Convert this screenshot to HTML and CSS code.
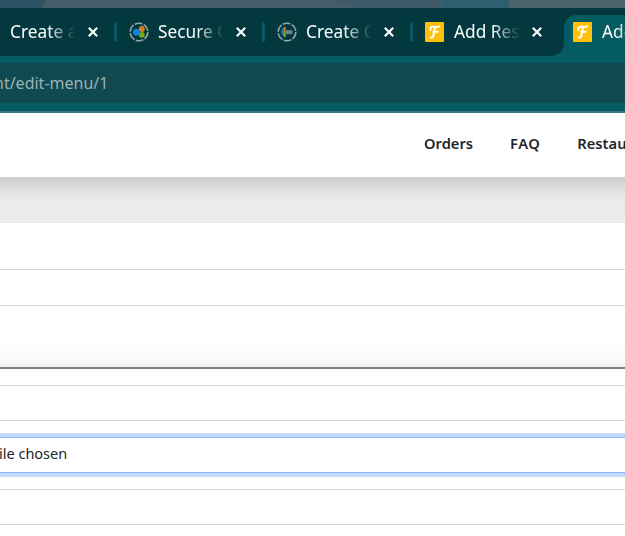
FILE: index.html
```html
<!DOCTYPE html>
<html lang="en">
<head>
<meta charset="utf-8">
<title>Edit menu</title>
<link rel="stylesheet" href="styles.css">
</head>
<body>
<svg class="wallpaper" viewBox="0 0 625 8" preserveAspectRatio="none">
  <path fill="#465c69" d="M0 0h625v8H0z"/>
  <path fill="#2c5263" d="M0 0h46l-5 8H0z"/>
  <path fill="#3f5a69" d="M335 0h105v8h-85z"/>
  <path fill="#2e5f70" d="M439 0h69l2 8h-67z"/>
  <path fill="#4c626d" d="M508 0h117v8H510z"/>
</svg>
<div class="tabs">
  <div class="tab first">
    <span class="title">Create a</span>
    <svg class="close" viewBox="0 0 10 10"><path d="M.8.8l8.4 8.4M9.2.8L.8 9.2"/></svg>
    <i class="sep"></i>
  </div>
  <div class="tab">
    <svg class="icon" viewBox="0 0 20 20">
      <circle class="ring" cx="10" cy="10" r="8.8"/>
      <circle cx="12.8" cy="7.1" r="3" fill="#d7811c"/><circle cx="12.8" cy="12.8" r="2.9" fill="#72ad16"/><circle cx="7.4" cy="10.2" r="3.4" fill="#0b86df"/>
    </svg>
    <span class="title">Secure C</span>
    <svg class="close" viewBox="0 0 10 10"><path d="M.8.8l8.4 8.4M9.2.8L.8 9.2"/></svg>
    <i class="sep"></i>
  </div>
  <div class="tab">
    <svg class="icon" viewBox="0 0 20 20">
      <circle class="ring" cx="10" cy="10" r="8.8"/>
      <path fill="#1681bd" d="M6.7 5.500v9C3.400 12 3.400 8 6.700 5.500z"/><path fill="#cf8427" d="M6.700 5h2v5h-2z"/><path fill="#81ad28" d="M6.700 10h2v5h-2z"/>
      <path fill="#65767b" d="M8.800 8.200h6.600v4H8.800z"/><path stroke="#929ea1" stroke-width=".6" d="M10.500 8.400v3.400m2-3.400v3.400m2-3.400v3.400"/>
    </svg>
    <span class="title">Create C</span>
    <svg class="close" viewBox="0 0 10 10"><path d="M.8.8l8.4 8.4M9.2.8L.8 9.2"/></svg>
    <i class="sep"></i>
  </div>
  <div class="tab">
    <svg class="icon brand" viewBox="0 0 19 20">
      <rect width="19" height="20" rx="1" fill="#ffc107"/>
      <path class="mark" d="M5.600 8C4.500 5.300 6.600 4.500 9 4.800c2 .2 3.600.2 5.200-.5M10 5.200L8.400 13.500c-.4 2-1.500 2.700-2.600 1.700M8.400 9.800h4.400"/>
    </svg>
    <span class="title">Add Rest</span>
    <svg class="close" viewBox="0 0 10 10"><path d="M.8.8l8.4 8.4M9.2.8L.8 9.2"/></svg>
  </div>
  <div class="tab active">
    <svg class="curve" viewBox="0 0 14 14"><path d="M14 0v14H0C9 14 14 9 14 0z"/></svg>
    <svg class="icon brand" viewBox="0 0 19 20">
      <rect width="19" height="20" rx="1" fill="#ffc107"/>
      <path class="mark" d="M5.600 8C4.500 5.300 6.600 4.500 9 4.800c2 .2 3.600.2 5.200-.5M10 5.200L8.400 13.500c-.4 2-1.500 2.700-2.600 1.700M8.400 9.800h4.400"/>
    </svg>
    <span class="title">Add</span>
  </div>
</div>
<div class="toolbar"><div class="address"><span>nt/edit-menu/1</span></div></div>
<nav><a>Orders</a><a>FAQ</a><a>Restau</a></nav>
<div class="band"></div>
<main>
  <div class="row"></div>
  <div class="panel"></div>
  <div class="input"></div>
  <div class="input focused"><span>file chosen</span></div>
  <div class="input"></div>
</main>
</body>
</html>
```
FILE: styles.css
```css
* { box-sizing: border-box; }
body { margin: 0; width: 625px; height: 536px; overflow: hidden; background: #fff; font-family: "Noto Sans", sans-serif; }
.wallpaper { display: block; width: 100%; height: 8px; }
.tabs { display: flex; height: 48px; overflow: hidden; background: #03393e; }
.tab { position: relative; flex: 0 0 148px; height: 48px; display: flex; align-items: center; padding-left: 13px; }
.tab.first { flex-basis: 116px; padding-left: 10px; }
.tab.active { flex: 0 0 61px; height: 41px; margin: 7px 0 0 4px; padding: 0 0 7px 9px; border-radius: 12px 0 0; background: #045b61; }
.icon { flex: none; width: 20px; height: 20px; margin-right: 9px; }
.brand { width: 19px; margin-right: 10px; }
.ring { fill: none; stroke: #98a6a9; stroke-width: 1.5; stroke-dasharray: 7.800 1.415; }
.mark { fill: none; stroke: #fff; stroke-width: 2; stroke-linecap: round; }
.title { flex: none; width: 64px; overflow: hidden; white-space: nowrap; color: #fcfcfc; font-size: 17.3px; line-height: 24px; mask-image: linear-gradient(90deg, #000 38px, transparent 66px); }
.active .title { width: 23px; mask-image: linear-gradient(90deg, #000 12px, transparent 50px); }
.close { flex: none; width: 10px; height: 10px; margin-left: 14px; fill: none; stroke: #fcfcfc; stroke-width: 2.2; }
.sep { position: absolute; right: -1px; top: 14px; width: 3px; height: 20px; border-radius: 2px; background: #045b61; }
.curve { position: absolute; left: -14px; bottom: 0; width: 14px; height: 14px; fill: #045b61; }
.toolbar { height: 57px; padding-top: 7px; background: #045b61; border-bottom: 2px solid #38777e; }
.address { display: flex; align-items: center; height: 40px; padding-bottom: 1px; overflow: hidden; background: #104950; color: #9bb2b5; font-size: 16px; }
.address span { margin-left: -6px; }
nav { display: flex; align-items: center; gap: 37px; height: 64px; padding: 0 0 4px 424px; overflow: hidden; background: #fff; color: #212529; font-size: 14.700px; font-weight: 600; }
nav a:nth-child(2) { letter-spacing: .5px; }
.band { height: 46px; background: linear-gradient(rgba(0,0,0,.13), rgba(0,0,0,.1) 5px, rgba(0,0,0,.045) 13px, transparent 24px) #ebebeb; }
.row { height: 37px; margin-top: 46px; border: solid #d3d3d3; border-width: 1px 0; }
.panel { height: 63px; border-bottom: 2px solid #808080; background: linear-gradient(#fff 35px, #f9f9f9 56px, #eee); }
.input { height: 36px; margin-top: 16px; border: solid #ced4da; border-width: 1px 0; }
.focused { display: flex; align-items: center; overflow: hidden; border-color: #86b7fe; box-shadow: 0 0 0 4px #c2dbfe; color: #212529; font-size: 14.500px; padding-bottom: 4px; }
.focused span { margin-left: -6px; }
```
